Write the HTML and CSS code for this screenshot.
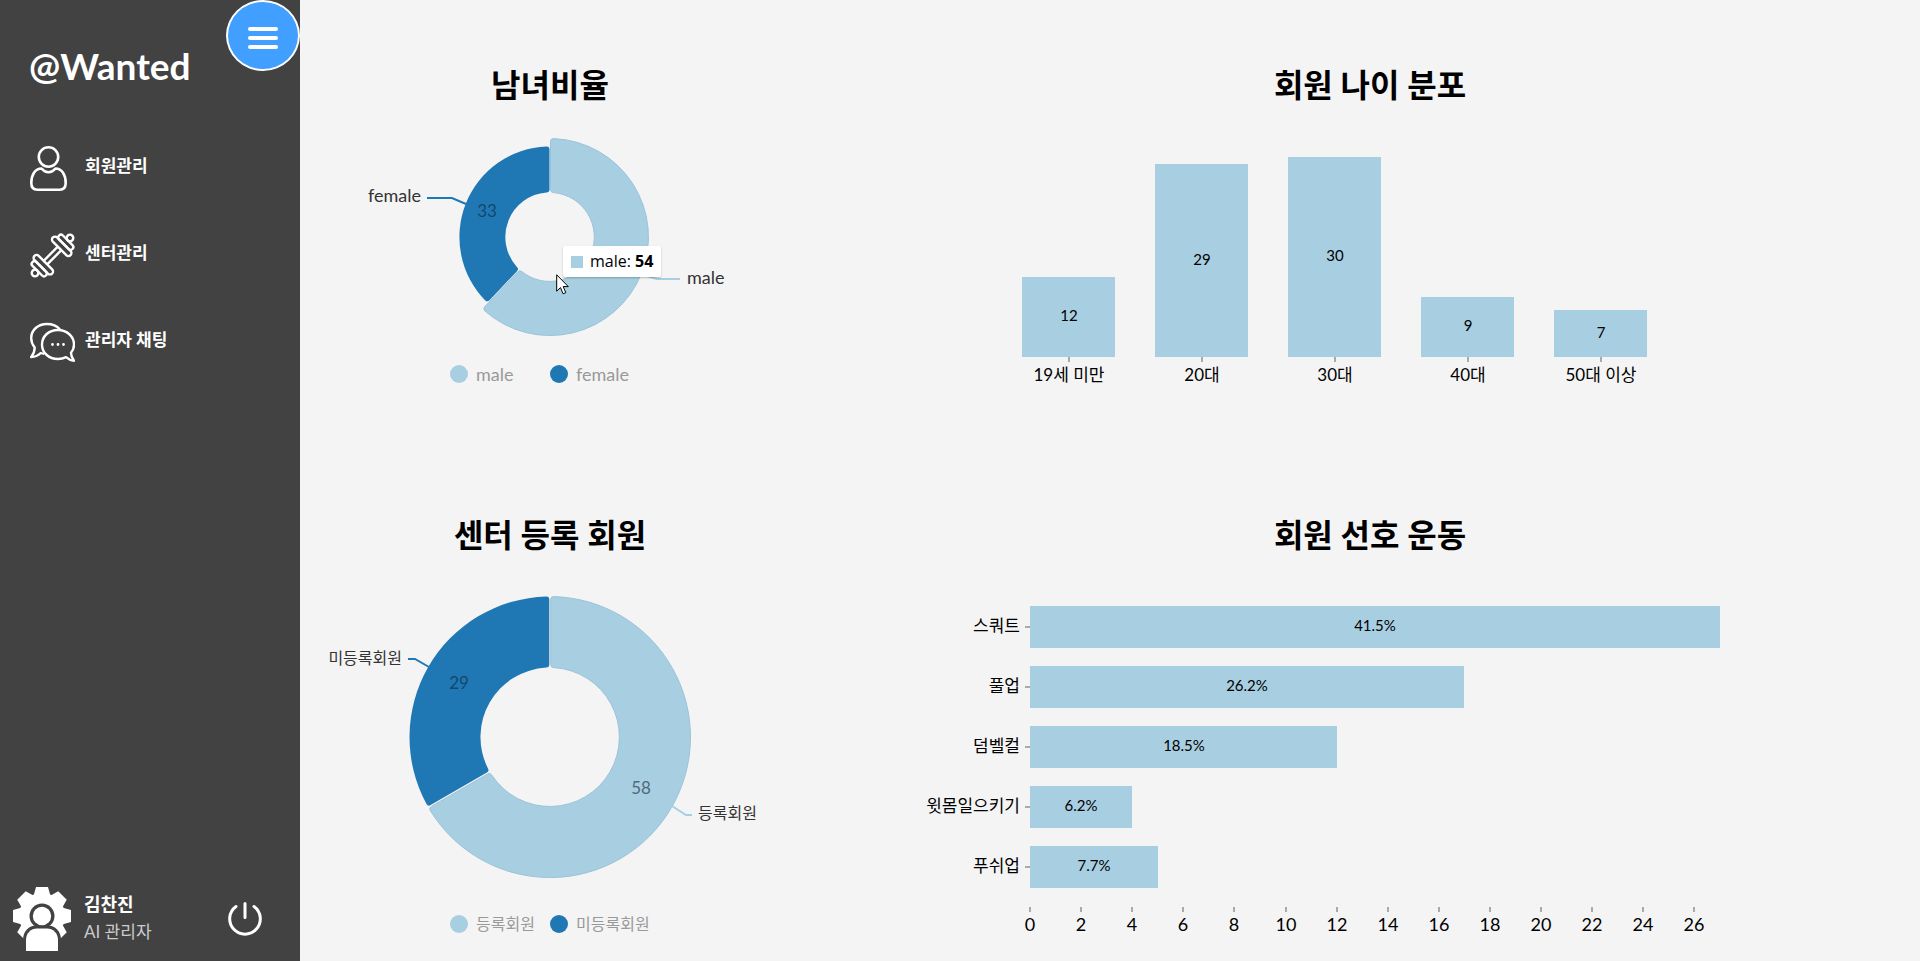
FILE: index.html
```html
<!DOCTYPE html>
<html lang="ko">
<head>
<meta charset="utf-8">
<meta name="viewport" content="width=device-width, initial-scale=1">
<title>@Wanted</title>
<link rel="stylesheet" href="styles.css">
</head>
<body>
<div class="layout">
  <aside class="sidebar">
    <button class="menu-toggle" type="button" aria-label="메뉴">
      <svg width="30" height="22" viewBox="0 0 30 22" fill="none" stroke="#fff" stroke-width="4" stroke-linecap="round"><path d="M2 2h26M2 11h26M2 20h26"/></svg>
    </button>
    <h1 class="logo">@Wanted</h1>
    <nav class="menu">
      <a class="menu-link" href="#members">
        <svg class="menu-icon" viewBox="0 0 45 45" fill="none" stroke="#fff" stroke-width="2.600" stroke-linejoin="round"><circle cx="18.500" cy="11" r="9.700"/><path d="M11.500 22.500C5 22.500 1.300 29 1.300 37c0 5 2.200 6.700 6 6.700h22.400c3.800 0 6-1.700 6-6.700 0-8-3.700-14.500-10.200-14.500-2.200 2.700-4.500 3.700-7 3.700s-4.800-1-7-3.700z"/></svg>
        <span>회원관리</span>
      </a>
      <a class="menu-link" href="#centers">
        <svg class="menu-icon" viewBox="0 0 45 45" fill="none" stroke="#fff" stroke-width="2.400"><g transform="translate(22.500 22.500) rotate(-45)"><path d="M-10-2.500h20M-10 2.500h20"/><rect x="10" y="-12.500" width="6" height="25" rx="3"/><rect x="16" y="-9.500" width="5.500" height="19" rx="2.700"/><circle cx="24.700" cy="0" r="3.300"/><rect x="-16" y="-12.500" width="6" height="25" rx="3"/><rect x="-21.500" y="-9.500" width="5.500" height="19" rx="2.700"/><circle cx="-24.700" cy="0" r="3.300"/></g></svg>
        <span>센터관리</span>
      </a>
      <a class="menu-link" href="#chat">
        <svg class="menu-icon" viewBox="0 0 45 45" fill="none" stroke="#fff" stroke-width="2.400" stroke-linejoin="round"><path d="M30 9.500C27 6 22.500 4 17 4 8 4 1.200 10 1.200 18c0 4 1.500 7 3.500 9.500 0 4-1.500 7-3.500 9.500 4 0 7-1.500 9.500-4 1.200.5 2.300.7 3.500.8"/><path d="M28 10C18.500 10 12 16.500 12 24.500S18.500 39 28 39c3 0 5.500-.6 8-1.800 2.300 2 5 3.500 8 3.600-1.800-2.300-3-5-3-8 1.900-2.300 3-5.200 3-8.300C44 16.500 37 10 28 10z"/><path d="M22.500 24.500h.01M28 24.500h.01M33.500 24.500h.01" stroke-width="2.800" stroke-linecap="round"/></svg>
        <span>관리자 채팅</span>
      </a>
    </nav>
    <footer class="account">
      <svg class="avatar" viewBox="0 0 58 64"><g fill="#fff"><circle cx="29" cy="29" r="23"/><path d="M20.500 9 23 0h12l2.500 9v40L35 58H23l-2.500-9z"/><path d="M20.500 9 23 0h12l2.500 9v40L35 58H23l-2.500-9z" transform="rotate(45 29 29)"/><path d="M20.500 9 23 0h12l2.500 9v40L35 58H23l-2.500-9z" transform="rotate(90 29 29)"/><path d="M20.500 9 23 0h12l2.500 9v40L35 58H23l-2.500-9z" transform="rotate(135 29 29)"/></g><path d="M10 64V53c0-9 6-14.500 13-14.500h12c7 0 13 5.500 13 14.500v11z" fill="#424242"/><circle cx="29" cy="29" r="12.500" fill="#424242"/><circle cx="29" cy="29" r="9.200" fill="#fff"/><path d="M13 64V53c0-7 5-11.500 11-11.500h10c6 0 11 4.500 11 11.500v11z" fill="#fff"/></svg>
      <div class="account-text">
        <strong class="account-name">김찬진</strong>
        <span class="account-role">AI 관리자</span>
      </div>
      <button class="power" type="button" aria-label="로그아웃">
        <svg width="34" height="34" viewBox="0 0 34 34" fill="none" stroke="#fff" stroke-width="3" stroke-linecap="round"><path d="M17 1.500v14M8 4.500a15.300 15.300 0 1 0 18 0"/></svg>
      </button>
    </footer>
  </aside>

  <main class="dashboard">
    <section class="card">
      <h2 class="card-title">남녀비율</h2>
      <div class="figure">
        <svg class="chart" viewBox="0 0 500 245">
          <g transform="translate(250 127)">
            <path class="slice-light" d="M.5-95.500Q.5-98.500 3.500-98.400A98.500 98.500 0 1 1-65.100 74Q-67.300 71.900-65.300 69.700L-32.300 34.900Q-30.200 32.700-28 34.700A44.500 44.500 0 1 0 3.500-44.400Q.5-44.500.5-47.500Z"/>
            <path class="slice-dark" d="M-60.500 63.200Q-62.500 65.400-64.700 63.400A90.500 90.500 0 0 1-3.500-90.400Q-.5-90.500-.5-87.500L-.5-47.500Q-.5-44.500-3.500-44.400A44.500 44.500 0 0 0-33.100 29.900Q-30.900 32-33 34.200Z"/>
          </g>
          <path class="link-dark" d="M127 88h25l14 6"/>
          <path class="link-light" d="M340 164l17 5h23"/>
          <text class="label" x="121" y="92" text-anchor="end">female</text>
          <text class="label" x="387" y="174">male</text>
          <text class="slice-value value-dark" x="187" y="107">33</text>
        </svg>
        <div class="tooltip"><span class="tooltip-chip"></span><span>male: <strong>54</strong></span></div>
        <svg class="cursor" width="13" height="21" viewBox="0 0 13 21"><path d="M.7.8v16.400l3.800-3.600 2.600 6.200 2.700-1.200-2.600-6h5.100z" fill="#fff" stroke="#000" stroke-width="1"/></svg>
      </div>
      <ul class="legend">
        <li class="legend-item"><span class="dot dot-light"></span>male</li>
        <li class="legend-item"><span class="dot dot-dark"></span>female</li>
      </ul>
    </section>

    <section class="card">
      <h2 class="card-title">회원 나이 분포</h2>
      <svg class="chart" viewBox="0 0 1100 300">
        <g class="bars">
          <rect x="202" y="167" width="93" height="80"/>
          <rect x="335" y="54" width="93" height="193"/>
          <rect x="468" y="47" width="93" height="200"/>
          <rect x="601" y="187" width="93" height="60"/>
          <rect x="734" y="200" width="93" height="47"/>
        </g>
        <path class="tick" d="M249 247v5M382 247v5M515 247v5M648 247v5M781 247v5"/>
        <g class="bar-value">
          <text x="249" y="211">12</text><text x="382" y="155">29</text><text x="515" y="151">30</text><text x="648" y="221">9</text><text x="781" y="228">7</text>
        </g>
        <g class="axis-label">
          <text x="249" y="271">19세 미만</text><text x="382" y="271">20대</text><text x="515" y="271">30대</text><text x="648" y="271">40대</text><text x="781" y="271">50대 이상</text>
        </g>
      </svg>
    </section>

    <section class="card">
      <h2 class="card-title">센터 등록 회원</h2>
      <div class="figure">
        <svg class="chart" viewBox="0 0 500 345">
          <g transform="translate(250 177)">
            <path class="slice-light" d="M.7-137.500Q.7-140.500 3.700-140.400A140.500 140.500 0 1 1-119.800 73.500Q-121.300 70.900-118.700 69.400L-62.400 36.900Q-59.800 35.400-58.300 38A69.500 69.500 0 1 0 3.700-69.400Q.7-69.500.7-72.500Z"/>
            <path class="slice-dark" d="M-119.400 68.100Q-122 69.600-123.500 67A140.500 140.500 0 0 1-3.700-140.400Q-.7-140.500-.7-137.500L-.7-72.500Q-.7-69.500-3.700-69.400A69.500 69.500 0 0 0-62 31.500Q-60.500 34.100-63.100 35.600Z"/>
          </g>
          <path class="link-dark" d="M108 99h7l14 8"/>
          <path class="link-light" d="M372 246l14 9h6"/>
          <text class="label label-ko" x="102" y="104" text-anchor="end">미등록회원</text>
          <text class="label label-ko" x="398" y="259">등록회원</text>
          <text class="slice-value value-dark" x="159" y="129">29</text>
          <text class="slice-value" x="341" y="234">58</text>
        </svg>
      </div>
      <ul class="legend legend-ko">
        <li class="legend-item"><span class="dot dot-light"></span>등록회원</li>
        <li class="legend-item"><span class="dot dot-dark"></span>미등록회원</li>
      </ul>
    </section>

    <section class="card">
      <h2 class="card-title">회원 선호 운동</h2>
      <svg class="chart" viewBox="0 0 1100 390">
        <g class="bars">
          <rect x="210" y="46" width="690" height="42"/>
          <rect x="210" y="106" width="434" height="42"/>
          <rect x="210" y="166" width="307" height="42"/>
          <rect x="210" y="226" width="102" height="42"/>
          <rect x="210" y="286" width="128" height="42"/>
        </g>
        <path class="tick" d="M205 67h5M205 127h5M205 187h5M205 247h5M205 307h5"/>
        <path class="tick" d="M210 347v5M261 347v5M312 347v5M363 347v5M414 347v5M466 347v5M517 347v5M568 347v5M619 347v5M670 347v5M721 347v5M772 347v5M823 347v5M874 347v5"/>
        <g class="bar-value">
          <text x="555" y="71">41.5%</text><text x="427" y="131">26.2%</text><text x="364" y="191">18.5%</text><text x="261" y="251">6.2%</text><text x="274" y="311">7.7%</text>
        </g>
        <g class="axis-label axis-label-left">
          <text x="200" y="72">스쿼트</text><text x="200" y="132">풀업</text><text x="200" y="192">덤벨컬</text><text x="200" y="252">윗몸일으키기</text><text x="200" y="312">푸쉬업</text>
        </g>
        <g class="axis-label axis-number">
          <text x="210" y="371">0</text><text x="261" y="371">2</text><text x="312" y="371">4</text><text x="363" y="371">6</text><text x="414" y="371">8</text><text x="466" y="371">10</text><text x="517" y="371">12</text><text x="568" y="371">14</text><text x="619" y="371">16</text><text x="670" y="371">18</text><text x="721" y="371">20</text><text x="772" y="371">22</text><text x="823" y="371">24</text><text x="874" y="371">26</text>
        </g>
      </svg>
    </section>
  </main>
</div>
</body>
</html>
```
FILE: styles.css
```css
* { box-sizing: border-box; }

body {
  margin: 0;
  background: #f4f4f4;
  color: #000;
  font-family: Lato, "Noto Sans CJK KR", sans-serif;
  font-size: 16px;
}

.layout {
  display: grid;
  grid-template-columns: 300px minmax(0, 1fr);
  min-height: 100vh;
}

/* Sidebar */
.sidebar {
  position: relative;
  display: flex;
  flex-direction: column;
  padding: 42px 0 10px;
  background: #424242;
  color: #fff;
}

.menu-toggle {
  position: absolute;
  top: 0;
  right: 0;
  display: flex;
  align-items: center;
  justify-content: center;
  width: 74px;
  height: 71px;
  padding: 4px 0 0;
  border: 2px solid #fff;
  border-radius: 50%;
  background: #409fff;
}

.logo {
  margin: 0;
  padding-left: 29px;
  font-size: 37px;
  line-height: 48px;
  font-weight: 700;
}

.menu {
  display: grid;
  gap: 42px;
  margin-top: 56px;
  padding-left: 30px;
}

.menu-link {
  display: flex;
  align-items: center;
  gap: 10px;
  color: #fff;
  font-size: 17px;
  line-height: 24px;
  font-weight: 700;
  text-decoration: none;
}

.menu-link span { padding-bottom: 6px; }

.menu-icon {
  width: 45px;
  height: 45px;
}

.account {
  display: flex;
  align-items: center;
  margin-top: auto;
  padding: 0 38px 0 13px;
}

.avatar {
  width: 58px;
  height: 64px;
}

.account-text {
  display: grid;
  flex: 1;
  padding: 0 0 2px 13px;
  line-height: 28px;
}

.account-name { font-size: 18px; }

.account-role {
  color: #ccc;
  font-size: 17px;
}

.power {
  display: flex;
  padding: 0;
  border: 0;
  background: none;
}

/* Dashboard */
.dashboard {
  display: grid;
  grid-template-columns: minmax(0, 500fr) minmax(0, 1100fr);
  grid-template-rows: 450px auto;
  column-gap: 20px;
  align-content: start;
}

.card { padding-top: 60px; }

.card-title {
  margin: 0;
  font-size: 32px;
  line-height: 50px;
  font-weight: 700;
  text-align: center;
}

.figure { position: relative; }

.chart {
  display: block;
  width: 100%;
  height: auto;
}

.slice-light { fill: #a8cee2; stroke: #9cc3d9; stroke-width: 1; }
.slice-dark { fill: #1f78b4; }

.link-light, .link-dark { fill: none; stroke-width: 2; }
.link-light { stroke: #a8cee2; }
.link-dark { stroke: #1f78b4; }

.label { fill: #333; font-size: 18px; }
.label-ko { font-size: 16px; }

.slice-value { fill: #4f6b78; font-size: 17px; text-anchor: middle; }
.value-dark { fill: #13486c; }

.bars { fill: #a8cee2; }
.tick { fill: none; stroke: #aaa; stroke-width: 2; }
.bar-value { font-size: 15px; text-anchor: middle; }
.axis-label { font-size: 17px; text-anchor: middle; }
.axis-label-left { text-anchor: end; }
.axis-number { font-size: 18px; }

.legend {
  display: grid;
  grid-template-columns: 100px 100px;
  justify-content: center;
  margin: 0;
  padding: 0;
  color: #999;
  font-size: 18px;
  line-height: 38px;
  list-style: none;
}

.legend-ko { font-size: 16px; }

.legend-item {
  display: flex;
  align-items: center;
  gap: 8px;
  white-space: nowrap;
}

.dot {
  width: 18px;
  height: 18px;
  border-radius: 50%;
}

.dot-light { background: #a8cee2; }
.dot-dark { background: #1f78b4; }

.tooltip {
  position: absolute;
  top: 136px;
  left: calc(50% + 13px);
  display: flex;
  align-items: center;
  gap: 7px;
  padding: 4px 8px;
  border-radius: 2px;
  background: #fff;
  box-shadow: 0 1px 2px rgba(0, 0, 0, .25);
  font-family: "Open Sans", "Noto Sans", sans-serif;
  font-size: 16px;
  line-height: 23px;
  white-space: nowrap;
}

.tooltip-chip {
  width: 12px;
  height: 12px;
  background: #a8cee2;
}

.cursor {
  position: absolute;
  top: 164px;
  left: calc(50% + 6px);
}
```
